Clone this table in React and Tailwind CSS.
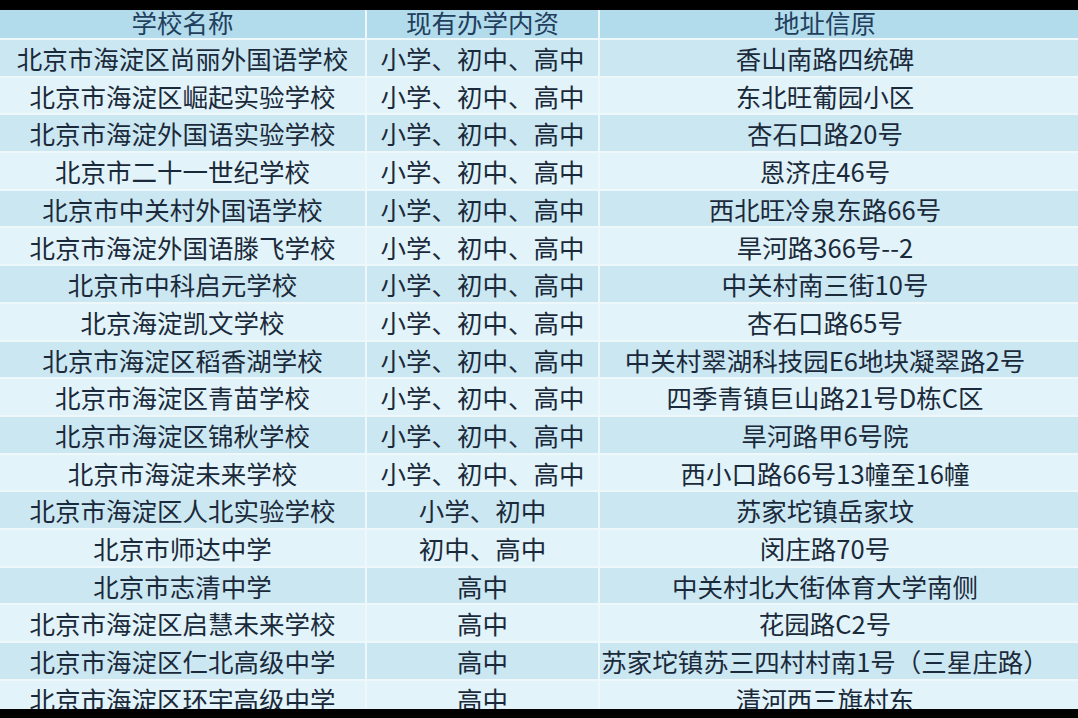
import React from "react";

const rows = [
  ["北京市海淀区尚丽外国语学校", "小学、初中、高中", "香山南路四统碑"],
  ["北京市海淀区崛起实验学校", "小学、初中、高中", "东北旺葡园小区"],
  ["北京市海淀外国语实验学校", "小学、初中、高中", "杏石口路20号"],
  ["北京市二十一世纪学校", "小学、初中、高中", "恩济庄46号"],
  ["北京市中关村外国语学校", "小学、初中、高中", "西北旺冷泉东路66号"],
  ["北京市海淀外国语滕飞学校", "小学、初中、高中", "旱河路366号--2"],
  ["北京市中科启元学校", "小学、初中、高中", "中关村南三街10号"],
  ["北京海淀凯文学校", "小学、初中、高中", "杏石口路65号"],
  ["北京市海淀区稻香湖学校", "小学、初中、高中", "中关村翠湖科技园E6地块凝翠路2号"],
  ["北京市海淀区青苗学校", "小学、初中、高中", "四季青镇巨山路21号D栋C区"],
  ["北京市海淀区锦秋学校", "小学、初中、高中", "旱河路甲6号院"],
  ["北京市海淀未来学校", "小学、初中、高中", "西小口路66号13幢至16幢"],
  ["北京市海淀区人北实验学校", "小学、初中", "苏家坨镇岳家坟"],
  ["北京市师达中学", "初中、高中", "闵庄路70号"],
  ["北京市志清中学", "高中", "中关村北大街体育大学南侧"],
  ["北京市海淀区启慧未来学校", "高中", "花园路C2号"],
  ["北京市海淀区仁北高级中学", "高中", "苏家坨镇苏三四村村南1号（三星庄路）"],
  ["北京市海淀区环宇高级中学", "高中", "清河西三旗村东"],
];

export default function App() {
  return (
    <div
      className="w-[1078px] h-[718px] bg-black overflow-hidden flex flex-col"
      style={{ fontFamily: '"Noto Sans CJK SC", "Noto Sans", sans-serif' }}
    >
      <div className="h-[10px] shrink-0 bg-black" />
      <div className="h-[699px] shrink-0 overflow-hidden bg-[#eef8fb]">
        <div className="grid grid-cols-[365px_231px_1fr] gap-x-[2px] gap-y-[2px] text-[25.5px] text-[#1b2a3a] whitespace-nowrap">
          <div className="h-[28px] bg-[#b2dbeb] flex items-center justify-center overflow-hidden text-[#233f5e] leading-none">
            <span className="-mt-[4px]">学校名称</span>
          </div>
          <div className="h-[28px] bg-[#b2dbeb] flex items-center justify-center overflow-hidden text-[#233f5e] leading-none">
            <span className="-mt-[4px]">现有办学内资</span>
          </div>
          <div className="h-[28px] bg-[#b2dbeb] flex items-center justify-center overflow-hidden text-[#233f5e] leading-none pr-[28px]">
            <span className="-mt-[4px]">地址信原</span>
          </div>
          {rows.map((r, i) => {
            const bg = i % 2 === 0 ? "bg-[#cbe7f2]" : "bg-[#e2f3f9]";
            return (
              <React.Fragment key={i}>
                <div className={`h-[35.7px] ${bg} flex items-center justify-center leading-none`}>
                  {r[0]}
                </div>
                <div className={`h-[35.7px] ${bg} flex items-center justify-center leading-none`}>
                  {r[1]}
                </div>
                <div className={`h-[35.7px] ${bg} flex items-center justify-center leading-none pr-[28px]`}>
                  {r[2]}
                </div>
              </React.Fragment>
            );
          })}
        </div>
      </div>
      <div className="h-[9px] shrink-0 bg-black" />
    </div>
  );
}
